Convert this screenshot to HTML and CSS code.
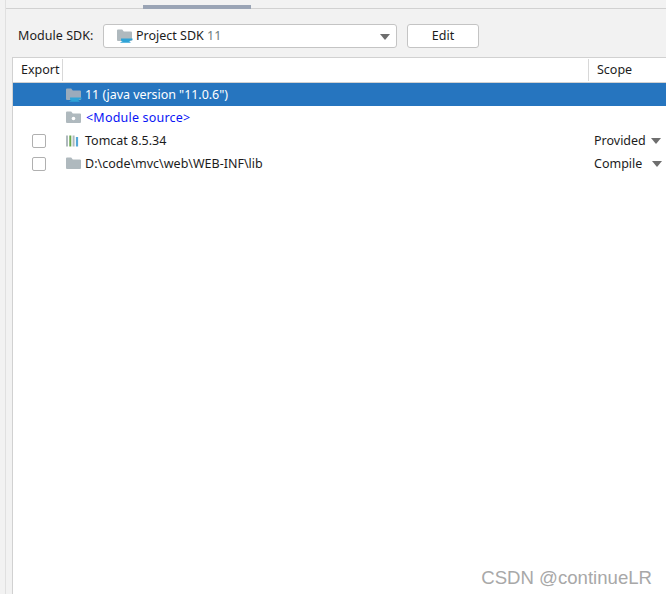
FILE: index.html
```html
<!DOCTYPE html>
<html lang="en">
<head>
<meta charset="utf-8">
<title>Module dependencies</title>
<link rel="stylesheet" href="styles.css">
</head>
<body>
<svg class="defs" width="0" height="0" aria-hidden="true">
  <defs>
    <path id="folder" d="M0 1.500a1 1 0 0 1 1-1h4.200l1.600 2H14a1 1 0 0 1 1 1V11a1 1 0 0 1-1 1H1a1 1 0 0 1-1-1z"/>
    <g id="sdk">
      <use href="#folder"/>
      <path class="cup" d="M4 9.500h9.500v1.500a2 2 0 0 1-2 2H6a2 2 0 0 1-2-2zM13.500 9.500h2v1.700h-2zM3.500 13.200h10v.8h-10z"/>
    </g>
  </defs>
</svg>
<div class="panel">
  <div class="tabs"><span class="tab-mark"></span></div>
  <div class="sdk-bar">
    <span class="sdk-label">Module SDK:</span>
    <div class="combo">
      <svg class="icon combo-icon" viewBox="0 0 16 14"><use href="#sdk"/></svg>
      <span>Project SDK <span class="muted">11</span></span>
      <span class="arrow combo-arrow"></span>
    </div>
    <button class="edit" type="button">Edit</button>
  </div>
  <div class="table">
    <div class="row head">
      <div class="c-export">Export</div>
      <div class="c-name"></div>
      <div class="c-scope">Scope</div>
    </div>
    <div class="row selected">
      <div class="c-export"></div>
      <div class="c-name java"><svg class="icon" viewBox="0 0 16 14"><use href="#sdk"/></svg>11 (java version "11.0.6")</div>
      <div class="c-scope"></div>
    </div>
    <div class="row">
      <div class="c-export"></div>
      <div class="c-name source"><svg class="icon" viewBox="0 0 16 14"><use href="#folder"/><circle class="dot" cx="7.500" cy="7.500" r="1.800"/></svg>&lt;Module source&gt;</div>
      <div class="c-scope"></div>
    </div>
    <div class="row">
      <div class="c-export"><span class="check"></span></div>
      <div class="c-name"><svg class="icon" viewBox="0 0 16 14"><rect class="b-g" x="0" y="1.500" width="2" height="11"/><rect class="b-n" x="3.300" y="1.500" width="2" height="11"/><rect class="b-l" x="6.600" y="1.500" width="2" height="11"/><rect class="b-c" x="9.900" y="3" width="2.200" height="9.500"/></svg>Tomcat 8.5.34</div>
      <div class="c-scope">Provided<span class="arrow"></span></div>
    </div>
    <div class="row">
      <div class="c-export"><span class="check"></span></div>
      <div class="c-name"><svg class="icon" viewBox="0 0 16 14"><use href="#folder"/></svg>D:\code\mvc\web\WEB-INF\lib</div>
      <div class="c-scope compile">Compile<span class="arrow"></span></div>
    </div>
  </div>
  <div class="watermark">CSDN @continueLR</div>
</div>
</body>
</html>
```
FILE: styles.css
```css
* { box-sizing: border-box; }
html, body { margin: 0; height: 100%; overflow: hidden; }
body { font: 12.5px/16px "Noto Sans", "Open Sans", sans-serif; color: #1c1c1c; background: #f2f2f2; }
.defs { position: absolute; }
.panel { position: relative; height: 594px; display: flex; flex-direction: column; border-left: 1px solid #e0e0e0; margin-left: 5px; }
.tabs { height: 9px; border-bottom: 1px solid #d1d1d1; flex: none; position: relative; }
.tab-mark { position: absolute; left: 137px; width: 108px; top: 5px; height: 4px; background: #9aa4b5; }
.sdk-bar { height: 48px; flex: none; display: flex; align-items: center; padding: 6px 0 0 12px; }
.sdk-label { width: 85px; letter-spacing: .05px; }
.combo { width: 294px; height: 24px; display: flex; align-items: center; padding: 0 10px 0 13px; background: #fff; border: 1px solid #c4c4c4; border-radius: 3px; position: relative; }
.combo-icon { margin-right: 1px; }
.muted { color: #6f7b7b; }
.combo-arrow { position: absolute; right: 6px; top: 9px; margin: 0; }
.edit { width: 72px; height: 24px; margin-left: 10px; padding: 0; font: inherit; color: inherit; background: #fff; border: 1px solid #c4c4c4; border-radius: 3px; }
.icon { width: 16px; height: 14px; flex: none; fill: #afb9be; margin-right: 3px; }
.selected .icon { fill: #9aabbc; }
.cup { fill: #2fa3d6; }
.dot { fill: #fff; }
.b-g { fill: #afb9be; } .b-n { fill: #6aa84f; } .b-l { fill: #afb9be; } .b-c { fill: #55a8d8; }
.arrow { display: inline-block; width: 0; height: 0; border: 5px solid transparent; border-top: 6px solid #6e6e6e; border-bottom: 0; }
.table { flex: 1; margin-left: 6px; background: #fff; border-top: 1px solid #d1d1d1; border-left: 1px solid #d1d1d1; }
.row { height: 23px; display: grid; grid-template-columns: 50px 525px 1fr; align-items: center; }
.head { height: 25px; border-bottom: 1px solid #d1d1d1; }
.head > div { height: 22px; display: flex; align-items: center; }
.head .c-export { padding-left: 8px; justify-content: flex-start; border-right: 1px solid #d8d8d8; }
.head .c-scope { padding-left: 8px; border-left: 1px solid #d8d8d8; }
.head .c-name { padding: 0; }
.c-export { display: flex; justify-content: center; padding-left: 2px; }
.c-name { display: flex; align-items: center; padding-left: 3px; white-space: nowrap; }
.java { letter-spacing: -.05px; }
.source { color: #0a14f5; letter-spacing: .2px; }
.source .icon { margin-right: 4px; }
.c-scope { padding-left: 6px; white-space: nowrap; display: flex; align-items: center; }
.c-scope .arrow { margin-left: 5px; }
.compile .arrow { margin-left: 10px; }
.selected { background: #2675bf; color: #fff; }
.check { width: 14px; height: 14px; background: #fff; border: 1px solid #b0b0b0; border-radius: 2px; }
.watermark { position: absolute; right: 14px; bottom: 5px; font: 18.6px/22px "Liberation Sans", sans-serif; color: #a8a8a8; text-shadow: 0 0 1px #fff; }
```
